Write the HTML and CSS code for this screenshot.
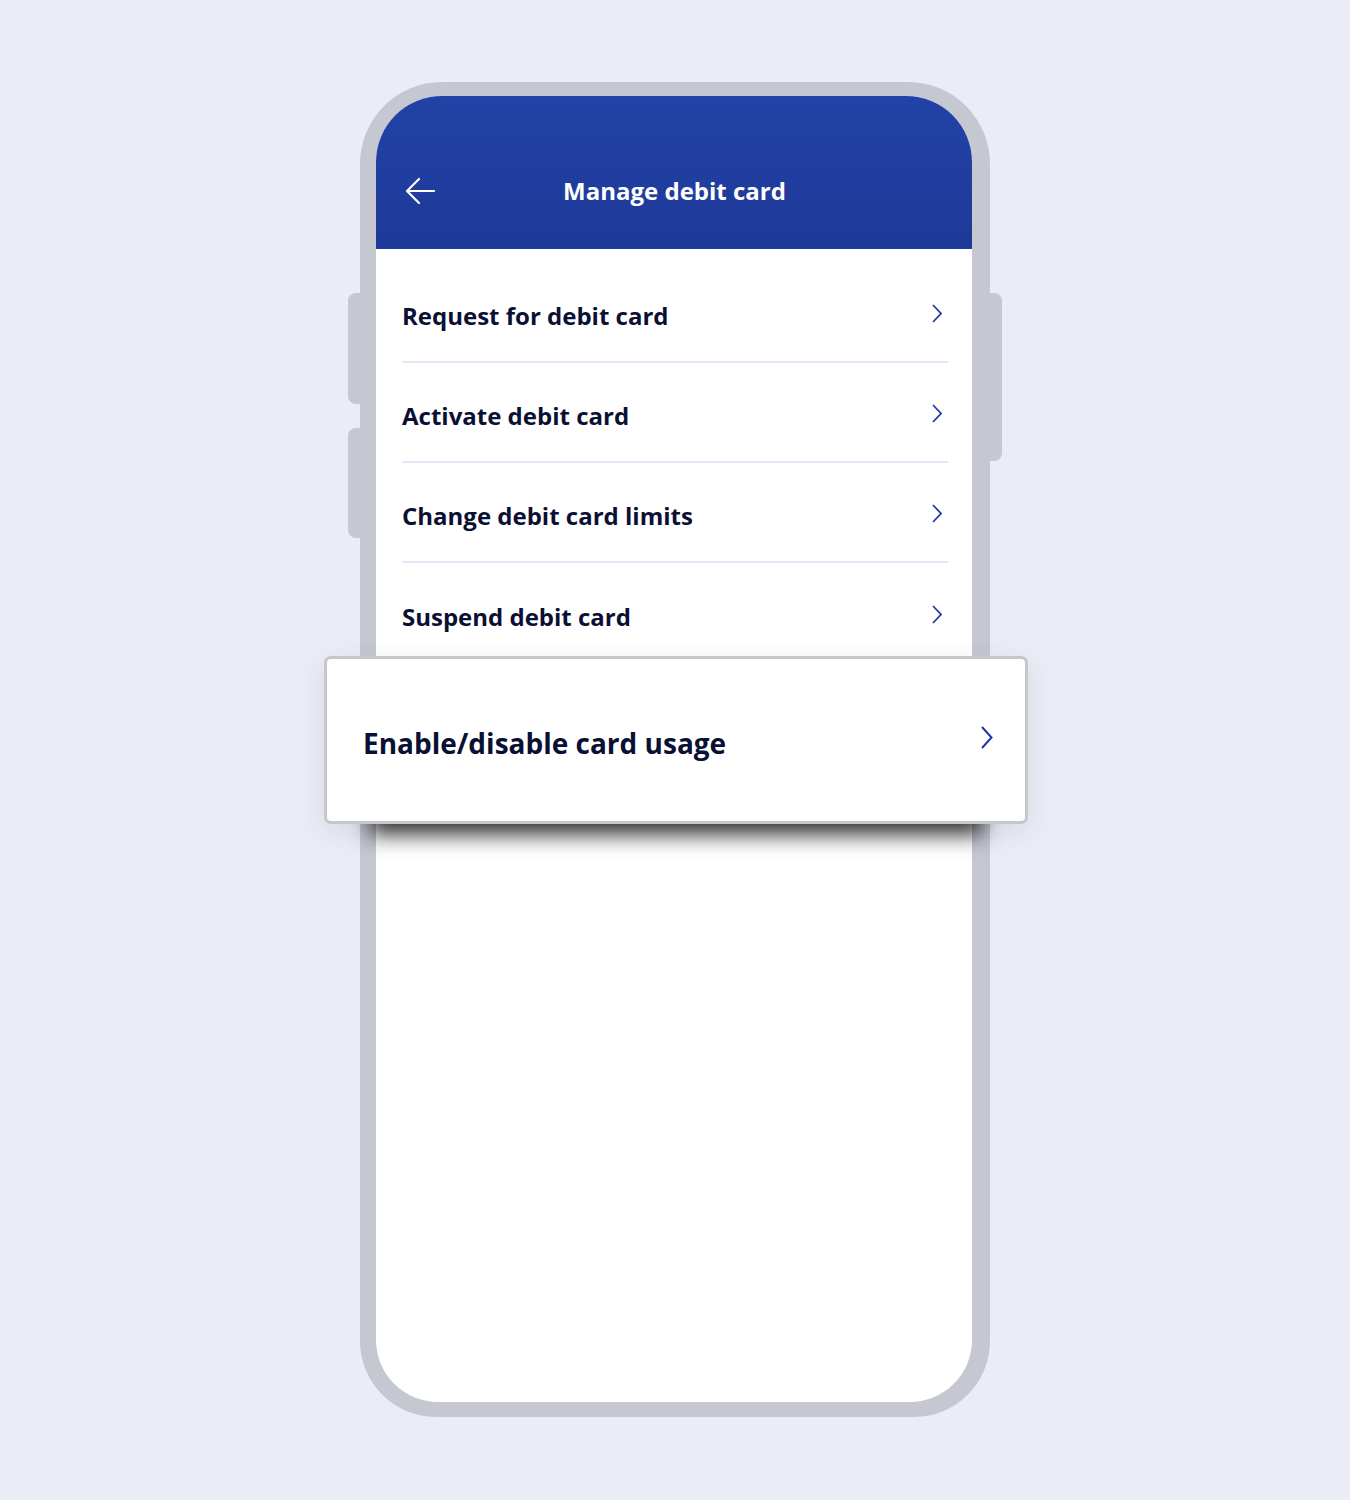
FILE: index.html
```html
<!DOCTYPE html>
<html lang="en">
<head>
<meta charset="utf-8">
<title>Manage debit card</title>
<link rel="stylesheet" href="styles.css">
</head>
<body>
<div class="stage">
  <div class="phone">
    <span class="side-btn side-left-1"></span>
    <span class="side-btn side-left-2"></span>
    <span class="side-btn side-right"></span>
    <div class="screen">
      <header class="app-header">
        <div class="header-row">
          <button class="back-btn" aria-label="Back">
            <svg width="30" height="28" viewBox="0 0 30 28" fill="none">
              <path d="M14 2 L2 14 L14 26 M2 14 H29" stroke="#fff" stroke-width="2.2" stroke-linecap="round" stroke-linejoin="round"/>
            </svg>
          </button>
          <h1 class="title">Manage debit card</h1>
        </div>
      </header>
      <ul class="menu">
        <li class="menu-item"><span class="label">Request for debit card</span>
          <svg class="chev" width="10" height="19" viewBox="0 0 10 19" fill="none"><path d="M1 1 L9 9.5 L1 18" stroke="#1e34aa" stroke-width="1.7"/></svg></li>
        <li class="menu-item"><span class="label">Activate debit card</span>
          <svg class="chev" width="10" height="19" viewBox="0 0 10 19" fill="none"><path d="M1 1 L9 9.5 L1 18" stroke="#1e34aa" stroke-width="1.7"/></svg></li>
        <li class="menu-item"><span class="label">Change debit card limits</span>
          <svg class="chev" width="10" height="19" viewBox="0 0 10 19" fill="none"><path d="M1 1 L9 9.5 L1 18" stroke="#1e34aa" stroke-width="1.7"/></svg></li>
        <li class="menu-item"><span class="label">Suspend debit card</span>
          <svg class="chev" width="10" height="19" viewBox="0 0 10 19" fill="none"><path d="M1 1 L9 9.5 L1 18" stroke="#1e34aa" stroke-width="1.7"/></svg></li>
      </ul>
    </div>
    <div class="popup-card">
      <span class="popup-label">Enable/disable card usage</span>
      <svg class="popup-chev" width="12" height="23" viewBox="0 0 12 23" fill="none"><path d="M1 1 L10.5 11.5 L1 22" stroke="#1e34aa" stroke-width="2"/></svg>
    </div>
  </div>
</div>
</body>
</html>
```

FILE: styles.css
```css
* { box-sizing: border-box; }

html, body {
  margin: 0;
  padding: 0;
  background: #eaedf5;
}

body {
  font-family: "Open Sans", "Noto Sans", "Liberation Sans", sans-serif;
  width: 1350px;
  height: 1500px;
  overflow: hidden;
}

.stage {
  display: flex;
  justify-content: center;
  padding-top: 82px;
}

.phone {
  position: relative;
  width: 630px;
  height: 1335px;
  background: #c5c8d0;
  border-radius: 82px 82px 76px 76px;
  padding: 14px 18px 15px 16px;
}

.side-btn {
  position: absolute;
  width: 14px;
  background: #c5c8d0;
}

.side-left-1 {
  left: -12px;
  top: 211px;
  height: 111px;
  border-radius: 8px 0 0 8px;
}

.side-left-2 {
  left: -12px;
  top: 346px;
  height: 110px;
  border-radius: 8px 0 0 8px;
}

.side-right {
  right: -12px;
  top: 211px;
  height: 168px;
  border-radius: 0 8px 8px 0;
}

.screen {
  width: 100%;
  height: 100%;
  background: #fff;
  border-radius: 66px 66px 62px 62px;
  overflow: hidden;
}

.app-header {
  height: 153px;
  background: linear-gradient(180deg, #2242a7 0%, #1e3a98 100%);
  border-bottom: 1px solid #1d3fae;
  padding-top: 72px;
}

.header-row {
  position: relative;
  height: 46px;
  display: flex;
  align-items: center;
  justify-content: center;
}

.back-btn {
  position: absolute;
  left: 29px;
  top: 9px;
  width: 30px;
  height: 28px;
  padding: 0;
  border: 0;
  background: none;
  display: flex;
}

.title {
  margin: 0;
  color: #fff;
  font-size: 24px;
  font-weight: 700;
  line-height: 46px;
  padding-left: 1px;
}

.menu {
  list-style: none;
  margin: 0;
  padding: 14px 24px 0 26px;
}

.menu-item {
  height: 100px;
  display: flex;
  align-items: center;
  justify-content: space-between;
  padding-top: 8px;
  border-bottom: 2px solid #e2e7f6;
}

.menu-item:last-child {
  border-bottom: 0;
}

.label {
  font-size: 24px;
  font-weight: 700;
  color: #0a1033;
  line-height: 34px;
}

.chev {
  margin-right: 6px;
  margin-top: -6px;
}

.popup-card {
  position: absolute;
  left: -36px;
  top: 574px;
  width: 704px;
  height: 168px;
  background: #fff;
  border: 3px solid #c5c7cb;
  border-radius: 7px;
  display: flex;
  align-items: center;
  justify-content: space-between;
  padding: 6px 32px 0 36px;
  box-shadow:
    0 56px 20px -46px rgba(0, 0, 0, 0.8),
    0 8px 30px rgba(40, 50, 90, 0.10);
}

.popup-label {
  font-size: 28px;
  font-weight: 700;
  color: #0a1033;
  line-height: 40px;
}

.popup-chev {
  margin-top: -12px;
}
```
